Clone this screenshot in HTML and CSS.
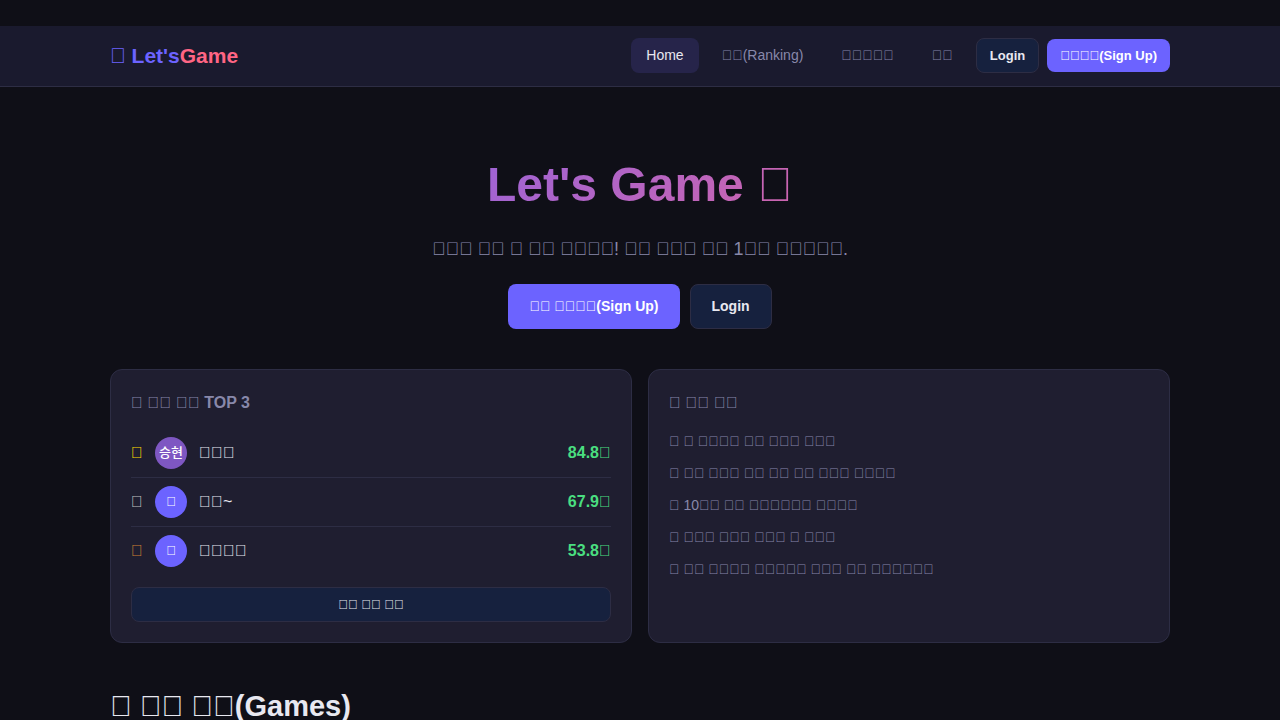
FILE: index.html
```
<!DOCTYPE html>
<html lang="ko">
<head>
    <meta charset="UTF-8">
    <meta name="viewport" content="width=device-width, initial-scale=1.0">
    <title>Let's Game</title>
    <link rel="stylesheet" href="styles.css">
</head>
<body>

<header class="navbar">
    <div class="container navbar-inner">
        <a href="#" class="logo">&#xE900; Let's<span>Game</span></a>
        <nav class="navbar-menu">
            <ul class="nav-links">
                <li><a href="#" class="active">Home</a></li>
                <li><a href="#ranking">&#xE900;&#xE900;(Ranking)</a></li>
                <li><a href="#community">&#xE900;&#xE900;&#xE900;&#xE900;&#xE900;</a></li>
                <li><a href="#shop">&#xE900;&#xE900;</a></li>
            </ul>
            <button type="button" class="btn btn-secondary btn-sm">Login</button>
            <button type="button" class="btn btn-primary btn-sm">&#xE900;&#xE900;&#xE900;&#xE900;(Sign Up)</button>
        </nav>
    </div>
</header>

<main class="container">
    <section class="hero">
        <h1>Let's Game &#xE900;</h1>
        <p>&#xE900;&#xE900;&#xE900; &#xE900;&#xE900; &#xE900; &#xE900;&#xE900; &#xE900;&#xE900;&#xE900;&#xE900;! &#xE900;&#xE900; &#xE900;&#xE900;&#xE900; &#xE900;&#xE900; 1&#xE900;&#xE900; &#xE900;&#xE900;&#xE900;&#xE900;&#xE900;.</p>
        <div class="hero-buttons">
            <button type="button" class="btn btn-primary">&#xE900;&#xE900; &#xE900;&#xE900;&#xE900;&#xE900;(Sign Up)</button>
            <button type="button" class="btn btn-secondary">Login</button>
        </div>
    </section>

    <section class="card-grid">
        <div class="card">
            <h3>&#xE900; &#xE900;&#xE900; &#xE900;&#xE900; TOP 3</h3>
            <ol class="rank-list">
                <li>
                    <span class="rank gold">&#xE900;</span>
                    <span class="avatar avatar-purple">승현</span>
                    <span class="name">&#xE900;&#xE900;&#xE900;</span>
                    <span class="score">84.8&#xE900;</span>
                </li>
                <li>
                    <span class="rank silver">&#xE900;</span>
                    <span class="avatar">&#xE900;</span>
                    <span class="name">&#xE900;&#xE900;~</span>
                    <span class="score">67.9&#xE900;</span>
                </li>
                <li>
                    <span class="rank bronze">&#xE900;</span>
                    <span class="avatar">&#xE900;</span>
                    <span class="name">&#xE900;&#xE900;&#xE900;&#xE900;</span>
                    <span class="score">53.8&#xE900;</span>
                </li>
            </ol>
            <button type="button" class="btn btn-secondary btn-sm btn-block">&#xE900;&#xE900; &#xE900;&#xE900; &#xE900;&#xE900;</button>
        </div>

        <div class="card">
            <h3>&#xE900; &#xE900;&#xE900; &#xE900;&#xE900;</h3>
            <ul class="info-list">
                <li>&#xE900; &#xE900; &#xE900;&#xE900;&#xE900;&#xE900; &#xE900;&#xE900; &#xE900;&#xE900;&#xE900; &#xE900;&#xE900;&#xE900;</li>
                <li>&#xE900; &#xE900;&#xE900; &#xE900;&#xE900;&#xE900; &#xE900;&#xE900; &#xE900;&#xE900; &#xE900;&#xE900; &#xE900;&#xE900;&#xE900; &#xE900;&#xE900;&#xE900;&#xE900;</li>
                <li>&#xE900; 10&#xE900;&#xE900; &#xE900;&#xE900; &#xE900;&#xE900;&#xE900;&#xE900;&#xE900;&#xE900; &#xE900;&#xE900;&#xE900;&#xE900;</li>
                <li>&#xE900; &#xE900;&#xE900;&#xE900; &#xE900;&#xE900;&#xE900; &#xE900;&#xE900;&#xE900; &#xE900; &#xE900;&#xE900;&#xE900;</li>
                <li>&#xE900; &#xE900;&#xE900; &#xE900;&#xE900;&#xE900;&#xE900; &#xE900;&#xE900;&#xE900;&#xE900;&#xE900; &#xE900;&#xE900;&#xE900; &#xE900;&#xE900; &#xE900;&#xE900;&#xE900;&#xE900;&#xE900;&#xE900;</li>
            </ul>
        </div>
    </section>

    <section class="games">
        <h2>&#xE900; &#xE900;&#xE900; &#xE900;&#xE900;(Games)</h2>
    </section>
</main>

</body>
</html>
```
FILE: styles.css
```
:root {
    --bg: #0f0f17;
    --surface: #1a1a2e;
    --card: #1f1e30;
    --border: #2d2d44;
    --primary: #6c63ff;
    --accent: #ff6584;
    --text: #e8e8f0;
    --muted: #8888aa;
}

* {
    box-sizing: border-box;
    margin: 0;
    padding: 0;
}

body {
    font-family: "Liberation Sans", "Noto Sans CJK KR", sans-serif;
    background-color: var(--bg);
    color: var(--text);
    font-size: 16px;
    line-height: 24px;
    padding-top: 26px;
}

a {
    text-decoration: none;
}

ul, ol {
    list-style: none;
}

.container {
    max-width: 1100px;
    margin: 0 auto;
    padding: 0 20px;
}

/* Navbar */
.navbar {
    background-color: var(--surface);
    border-bottom: 1px solid var(--border);
}

.navbar-inner {
    display: flex;
    align-items: center;
    justify-content: space-between;
    padding-top: 12px;
    padding-bottom: 13px;
}

.logo {
    color: var(--primary);
    font-size: 21px;
    font-weight: bold;
}

.logo span {
    color: var(--accent);
}

.navbar-menu,
.nav-links {
    display: flex;
    align-items: center;
    gap: 8px;
}

.nav-links a {
    display: block;
    color: var(--muted);
    font-size: 14px;
    line-height: 19px;
    padding: 8px 15px;
    border-radius: 8px;
}

.nav-links a.active {
    color: var(--text);
    background-color: #26244a;
}

/* Buttons */
.btn {
    border: none;
    border-radius: 8px;
    font-family: inherit;
    font-size: 14px;
    font-weight: bold;
    line-height: 17px;
    padding: 13px 21px;
    cursor: pointer;
}

.btn-sm {
    font-size: 13px;
    line-height: 15px;
    padding: 9px 13px;
}

.btn-primary {
    background-color: var(--primary);
    color: #fff;
}

.btn-secondary {
    background-color: #16213e;
    color: var(--text);
    border: 1px solid var(--border);
}

.btn-block {
    display: block;
    width: 100%;
}

/* Hero */
.hero {
    text-align: center;
    padding: 60px 0 40px;
}

.hero h1 {
    font-size: 48px;
    line-height: 76px;
    margin-bottom: 12px;
    background: linear-gradient(135deg, var(--primary), var(--accent));
    -webkit-background-clip: text;
    background-clip: text;
    color: transparent;
}

.hero p {
    color: var(--muted);
    font-size: 18px;
    line-height: 28px;
    margin-bottom: 21px;
}

.hero-buttons {
    display: flex;
    justify-content: center;
    gap: 10px;
}

/* Cards */
.card-grid {
    display: grid;
    grid-template-columns: 1fr 1fr;
    gap: 16px;
}

.card {
    background-color: var(--card);
    border: 1px solid var(--border);
    border-radius: 12px;
    padding: 20px;
}

.card h3 {
    color: var(--muted);
    font-size: 16px;
    line-height: 26px;
    margin-bottom: 13px;
}

.rank-list {
    margin-bottom: 12px;
}

.rank-list li {
    display: flex;
    align-items: center;
    gap: 12px;
    padding: 8px 0;
    border-bottom: 1px solid var(--border);
}

.rank-list li:last-child {
    border-bottom: none;
}

.gold {
    color: #ffd700;
}

.silver {
    color: #c0c0c0;
}

.bronze {
    color: #cd7f32;
}

.avatar {
    display: flex;
    align-items: center;
    justify-content: center;
    width: 32px;
    height: 32px;
    border-radius: 50%;
    background-color: var(--primary);
    color: #fff;
    font-size: 13px;
}

.avatar-purple {
    background-color: #7e57c2;
    font-weight: 500;
}

.name {
    flex: 1;
}

.score {
    color: #4ade80;
    font-weight: bold;
}

.info-list {
    display: flex;
    flex-direction: column;
    gap: 8px;
    color: var(--muted);
    font-size: 14px;
}

/* Games */
.games {
    padding: 40px 0;
}

.games h2 {
    font-size: 29px;
    line-height: 46px;
}

@media (max-width: 768px) {
    .navbar-inner, .navbar-menu, .nav-links {
        flex-wrap: wrap;
    }

    .card-grid {
        grid-template-columns: 1fr;
    }
}
```
